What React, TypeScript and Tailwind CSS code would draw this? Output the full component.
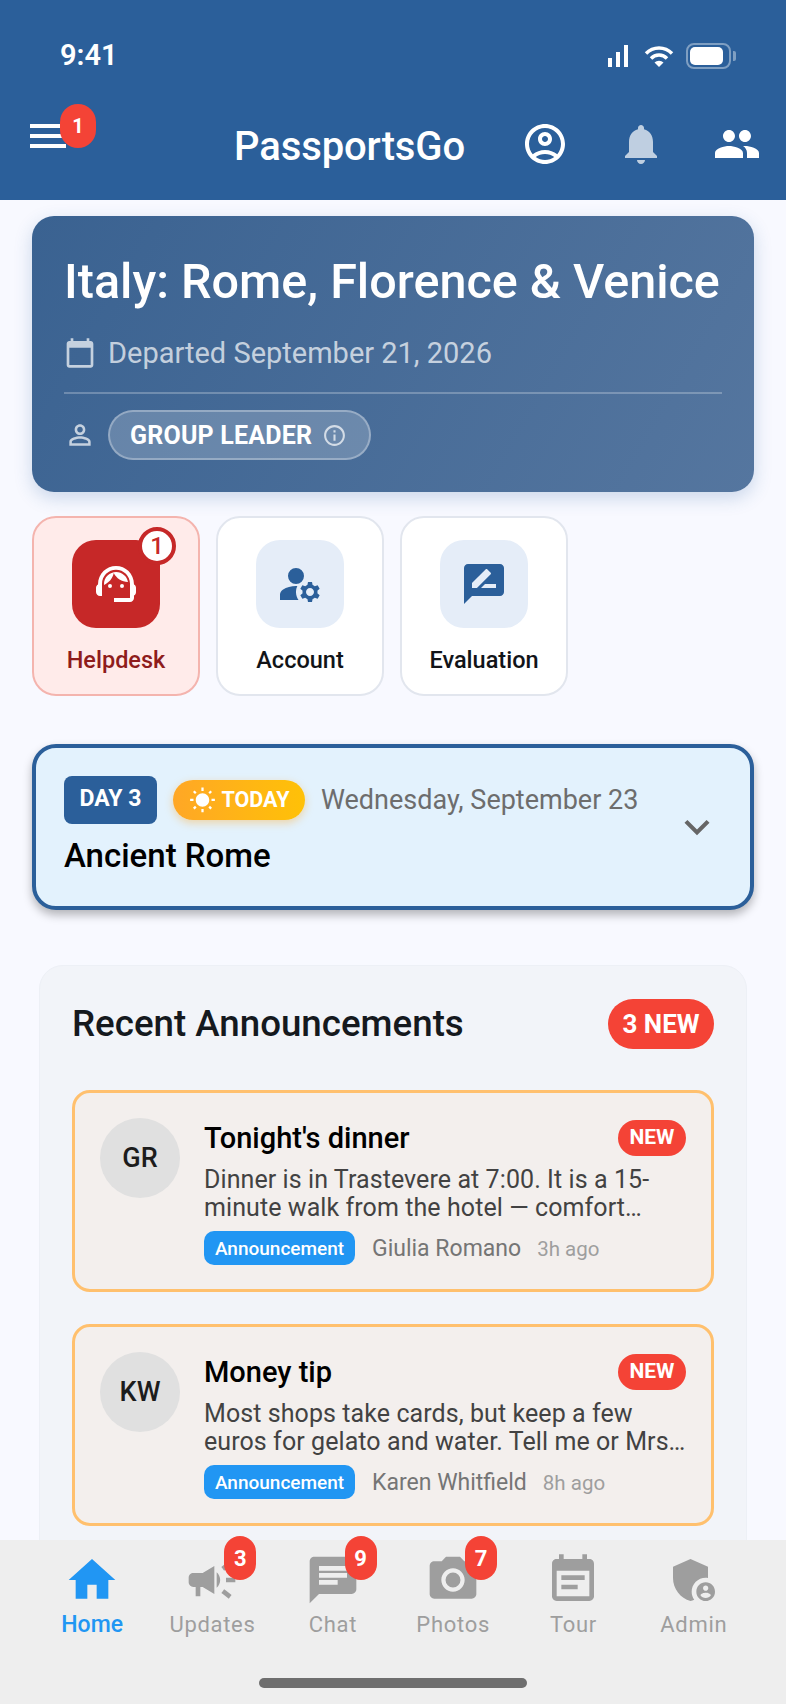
import React from "react";

const P = {
  account: "M12 2C6.48 2 2 6.48 2 12s4.48 10 10 10 10-4.48 10-10S17.52 2 12 2zM7.35 18.5C8.66 17.56 10.26 17 12 17s3.34.56 4.65 1.5c-1.31.94-2.91 1.5-4.65 1.5s-3.34-.56-4.65-1.5zm10.79-1.38C16.45 15.8 14.32 15 12 15s-4.45.8-6.14 2.12C4.7 15.73 4 13.95 4 12c0-4.42 3.58-8 8-8s8 3.58 8 8c0 1.95-.7 3.73-1.86 5.12zM12 6c-1.93 0-3.5 1.57-3.5 3.5S10.07 13 12 13s3.5-1.57 3.5-3.5S13.93 6 12 6zm0 5c-.83 0-1.5-.67-1.5-1.5S11.17 8 12 8s1.5.67 1.5 1.5S12.83 11 12 11z",
  bell: "M12 22c1.1 0 2-.9 2-2h-4c0 1.1.89 2 2 2zm6-6v-5c0-3.07-1.64-5.64-4.5-6.32V4c0-.83-.67-1.5-1.5-1.5s-1.5.67-1.5 1.5v.68C7.63 5.36 6 7.92 6 11v5l-2 2v1h16v-1l-2-2z",
  people: "M16 11c1.66 0 2.99-1.34 2.99-3S17.66 5 16 5c-1.66 0-3 1.34-3 3s1.34 3 3 3zm-8 0c1.66 0 2.99-1.34 2.99-3S9.66 5 8 5C6.34 5 5 6.34 5 8s1.34 3 3 3zm0 2c-2.33 0-7 1.17-7 3.5V19h14v-2.5c0-2.33-4.67-3.5-7-3.5zm8 0c-.29 0-.62.02-.97.05 1.16.84 1.97 1.97 1.97 3.45V19h6v-2.5c0-2.33-4.67-3.5-7-3.5z",
  calendar: "M20 3h-1V1h-2v2H7V1H5v2H4c-1.1 0-2 .9-2 2v16c0 1.1.9 2 2 2h16c1.1 0 2-.9 2-2V5c0-1.1-.9-2-2-2zm0 18H4V8h16v13z",
  person: "M12 5.9c1.16 0 2.1.94 2.1 2.1s-.94 2.1-2.1 2.1S9.9 9.16 9.9 8s.94-2.1 2.1-2.1m0 9c2.97 0 6.1 1.46 6.1 2.1v1.1H5.9V17c0-.64 3.13-2.1 6.1-2.1M12 4C9.79 4 8 5.79 8 8s1.79 4 4 4 4-1.79 4-4-1.79-4-4-4zm0 9c-2.67 0-8 1.34-8 4v3h16v-3c0-2.66-5.33-4-8-4z",
  info: "M11 7h2v2h-2zm0 4h2v6h-2zm1-9C6.48 2 2 6.48 2 12s4.48 10 10 10 10-4.48 10-10S17.52 2 12 2zm0 18c-4.41 0-8-3.59-8-8s3.59-8 8-8 8 3.59 8 8-3.59 8-8 8z",
  agent: "M21 12.22C21 6.73 16.74 3 12 3c-4.69 0-9 3.65-9 9.28-.6.34-1 .98-1 1.72v2c0 1.1.9 2 2 2h1v-6.1c0-3.87 3.13-7 7-7s7 3.13 7 7V19h-8v2h8c1.1 0 2-.9 2-2v-1.22c.59-.31 1-.92 1-1.64v-2.3c0-.7-.41-1.31-1-1.62zM8 13a1 1 0 1 0 2 0 1 1 0 1 0-2 0zM14 13a1 1 0 1 0 2 0 1 1 0 1 0-2 0zM18 11.03C17.52 8.18 15.04 6 12.05 6c-3.03 0-6.29 2.51-6.03 6.45 2.47-1.01 4.33-3.21 4.86-5.89 1.31 2.63 4 4.44 7.12 4.47z",
  manage: "M10.67 13.02c-.22-.01-.44-.02-.67-.02-2.42 0-4.68.67-6.61 1.82-.88.52-1.39 1.5-1.39 2.53V20h9.26c-.79-1.13-1.26-2.51-1.26-4 0-1.07.25-2.07.67-2.98zM6 8a4 4 0 1 0 8 0 4 4 0 1 0-8 0zM20.75 16c0-.22-.03-.42-.06-.63l1.14-1.01-1-1.73-1.45.49c-.32-.27-.68-.48-1.08-.63L18 11h-2l-.3 1.49c-.4.15-.76.36-1.08.63l-1.45-.49-1 1.73 1.14 1.01c-.03.21-.06.41-.06.63s.03.42.06.63l-1.14 1.01 1 1.73 1.45-.49c.32.27.68.48 1.08.63L16 21h2l.3-1.49c.4-.15.76-.36 1.08-.63l1.45.49 1-1.73-1.14-1.01c.03-.21.06-.41.06-.63zM17 18c-1.1 0-2-.9-2-2s.9-2 2-2 2 .9 2 2-.9 2-2 2z",
  review: "M20 2H4c-1.1 0-2 .9-2 2v18l4-4h14c1.1 0 2-.9 2-2V4c0-1.1-.9-2-2-2zM6 14v-2.47l6.88-6.88c.2-.2.51-.2.71 0l1.77 1.77c.2.2.2.51 0 .71L8.47 14H6zm12 0h-7.5l2-2H18v2z",
  sun: "M6.76 4.84l-1.8-1.79-1.41 1.41 1.79 1.79 1.42-1.41zM4 10.5H1v2h3v-2zm9-9.95h-2V3.5h2V.55zm7.45 3.91l-1.41-1.41-1.79 1.79 1.41 1.41 1.79-1.79zm-3.21 13.7l1.79 1.8 1.41-1.41-1.8-1.79-1.4 1.4zM20 10.5v2h3v-2h-3zm-8-5c-3.31 0-6 2.69-6 6s2.69 6 6 6 6-2.69 6-6-2.69-6-6-6zm-1 16.95h2V19.5h-2v2.95zm-7.45-3.91l1.41 1.41 1.79-1.8-1.41-1.41-1.79 1.8z",
  expand: "M16.59 8.59L12 13.17 7.41 8.59 6 10l6 6 6-6z",
  home: "M10 20v-6h4v6h5v-8h3L12 3 2 12h3v8z",
  campaign: "M18 11v2h4v-2h-4zm-2 6.61c.96.71 2.21 1.65 3.2 2.39.4-.53.8-1.07 1.2-1.6-.99-.74-2.24-1.68-3.2-2.4-.4.54-.8 1.08-1.2 1.61zM20.4 5.6c-.4-.53-.8-1.07-1.2-1.6-.99.74-2.24 1.68-3.2 2.4.4.53.8 1.07 1.2 1.6.96-.72 2.21-1.65 3.2-2.4zM4 9c-1.1 0-2 .9-2 2v2c0 1.1.9 2 2 2h1v4h2v-4h1l5 3V6L8 9H4zm11.5 3c0-1.33-.58-2.53-1.5-3.35v6.69c.92-.81 1.5-2.01 1.5-3.34z",
  chat: "M20 2H4c-1.1 0-1.99.9-1.99 2L2 22l4-4h14c1.1 0 2-.9 2-2V4c0-1.1-.9-2-2-2zM6 9h12v2H6V9zm8 5H6v-2h8v2zm4-6H6V6h12v2z",
  camera: "M8.8 12a3.2 3.2 0 1 0 6.4 0 3.2 3.2 0 1 0-6.4 0zM9 2L7.17 4H4c-1.1 0-2 .9-2 2v12c0 1.1.9 2 2 2h16c1.1 0 2-.9 2-2V6c0-1.1-.9-2-2-2h-3.17L15 2H9zm3 15c-2.76 0-5-2.24-5-5s2.24-5 5-5 5 2.24 5 5-2.24 5-5 5z",
  note: "M17 10H7v2h10v-2zm2-7h-1V1h-2v2H8V1H6v2H5c-1.11 0-1.99.9-1.99 2L3 19c0 1.1.89 2 2 2h14c1.1 0 2-.9 2-2V5c0-1.1-.9-2-2-2zm0 16H5V8h14v11zm-5-5H7v2h7v-2z",
  admin: "M17 11c.34 0 .67.04 1 .09V6.27L10.5 3 3 6.27v4.91c0 4.54 3.2 8.79 7.5 9.82.55-.13 1.08-.32 1.6-.55-.69-.98-1.1-2.17-1.1-3.45 0-3.31 2.69-6 6-6zM17 13c-2.21 0-4 1.79-4 4s1.79 4 4 4 4-1.79 4-4-1.79-4-4-4zm0 1.38c.62 0 1.12.51 1.12 1.12s-.51 1.12-1.12 1.12-1.12-.51-1.12-1.12.5-1.12 1.12-1.12zm0 5.37c-.93 0-1.74-.46-2.24-1.17.05-.72 1.51-1.08 2.24-1.08s2.19.36 2.24 1.08c-.5.71-1.31 1.17-2.24 1.17z",
};

function Icon({ d, className }: { d: string; className: string }) {
  return (
    <svg viewBox="0 0 24 24" fill="currentColor" className={className}>
      <path d={d} />
    </svg>
  );
}

function StatusBar() {
  return (
    <div className="flex h-[110px] items-start justify-between pl-[60px] pr-[50px] pt-[36px] text-white">
      <span className="text-[29px] leading-[38px] font-semibold">9:41</span>
      <div className="flex items-center gap-[12px] pt-[7px]">
        <div className="flex items-center gap-[15px]">
          <svg viewBox="0 0 21 22" className="h-[22px] w-[21px]" fill="currentColor">
            <rect x="0" y="13" width="4" height="9" />
            <rect x="8" y="7" width="4" height="15" />
            <rect x="16" y="0" width="4" height="22" />
          </svg>
          <svg viewBox="0 0 30 22" className="h-[22px] w-[30px]" fill="none" stroke="currentColor" strokeWidth="3.4">
            <path d="M2 8.5a18 18 0 0 1 26 0" />
            <path d="M7 13.5a11 11 0 0 1 16 0" />
            <path d="M10.500 17.500 15 22l4.500-4.500a6.500 6.500 0 0 0-9 0z" fill="currentColor" stroke="none" />
          </svg>
        </div>
        <div className="flex items-center gap-[2px]">
          <div className="flex h-[26px] w-[45px] items-center rounded-[8px] border-[2px] border-white/40 p-[2px]">
            <div className="h-full w-[33px] rounded-[5px] bg-white" />
          </div>
          <div className="h-[10px] w-[3px] rounded-r-[2px] bg-white/40" />
        </div>
      </div>
    </div>
  );
}

function TopBar() {
  return (
    <div className="relative flex h-[90px] items-start pl-[30px] pr-[25px]">
      <div className="mt-[14px] flex h-[24px] w-[36px] flex-col justify-between">
        <div className="h-[4px] bg-white" />
        <div className="h-[4px] bg-white" />
        <div className="h-[4px] bg-white" />
      </div>
      <span className="absolute left-[60px] top-[-6px] flex h-[44px] w-[36px] items-center justify-center rounded-full bg-[#f44336] text-[20px] font-bold text-white">
        1
      </span>
      <span className="ml-[168px] mt-[12px] text-[40px] leading-[50px] font-medium tracking-[-0.1px] text-white">PassportsGo</span>
      <div className="ml-auto flex items-center gap-[48px] pt-[10px] text-white">
        <Icon d={P.account} className="size-[48px]" />
        <Icon d={P.bell} className="size-[48px] text-white/70" />
        <Icon d={P.people} className="size-[48px]" />
      </div>
    </div>
  );
}

function TripCard() {
  return (
    <section className="flex h-[276px] flex-col rounded-[22px] bg-[linear-gradient(120deg,#3a6291,#55769f)] px-[32px] pt-[38px] shadow-[0_6px_18px_rgba(42,95,158,0.22)]">
      <h1 className="text-[48.5px] leading-[56px] font-medium whitespace-nowrap text-white">Italy: Rome, Florence &amp; Venice</h1>
      <div className="mt-[25px] flex items-center gap-[12px] text-white/70">
        <Icon d={P.calendar} className="size-[32px]" />
        <span className="text-[29px] leading-[36px]">Departed September 21, 2026</span>
      </div>
      <div className="mt-[21px] h-[2px] bg-white/25" />
      <div className="mt-[16px] flex items-center gap-[12px]">
        <Icon d={P.person} className="size-[32px] text-white/70" />
        <div className="flex h-[50px] w-[263px] items-center gap-[10px] rounded-full border-[2px] border-white/30 bg-white/20 pl-[20px] pt-[1px] text-white">
          <span className="text-[25px] font-bold tracking-[0.2px] whitespace-nowrap">GROUP LEADER</span>
          <Icon d={P.info} className="size-[25px] text-white/70" />
        </div>
      </div>
    </section>
  );
}

function Tile({ icon, label, danger }: { icon: string; label: string; danger?: boolean }) {
  return (
    <div
      className={
        danger
          ? "relative flex h-[180px] w-[168px] flex-col items-center rounded-[24px] border-[2px] border-[#f4b4ae] bg-[#ffebea] pt-[22px]"
          : "relative flex h-[180px] w-[168px] flex-col items-center rounded-[24px] border-[2px] border-[#e2e6ee] bg-white pt-[22px]"
      }
    >
      <div
        className={
          danger
            ? "flex size-[88px] items-center justify-center rounded-[24px] bg-[#c62828] text-white"
            : "flex size-[88px] items-center justify-center rounded-[24px] bg-[#e5edf8] text-[#2b5f9a]"
        }
      >
        <Icon d={icon} className="size-[48px]" />
      </div>
      <span className={danger ? "mt-[16px] text-[23.5px] leading-[32px] font-medium text-[#8e1c1c]" : "mt-[16px] text-[23.5px] leading-[32px] font-medium text-[#111418]"}>
        {label}
      </span>
      {danger && (
        <span className="absolute left-[104px] top-[9px] flex size-[38px] items-center justify-center rounded-full border-[4px] border-[#c62828] bg-white text-[24px] font-medium text-[#c62828]">
          1
        </span>
      )}
    </div>
  );
}

function DayCard() {
  return (
    <section className="flex h-[166px] items-center rounded-[24px] border-[4px] border-[#2b5f9a] bg-[#e3f2fd] pl-[28px] pr-[28px] shadow-[0_5px_10px_rgba(0,0,0,0.28)]">
      <div className="flex-1 pb-[2px]">
        <div className="flex items-center">
          <span className="flex h-[48px] w-[93px] items-center justify-center rounded-[8px] bg-[#2b5f9a] text-[23px] font-bold text-white">DAY 3</span>
          <span className="ml-[16px] flex h-[40px] w-[132px] items-center justify-center gap-[6px] rounded-full bg-[linear-gradient(90deg,#ffa726,#ffc107)] pt-[1px] text-white shadow-[0_3px_8px_rgba(255,167,38,0.4)]">
            <Icon d={P.sun} className="size-[27px]" />
            <span className="text-[21.5px] font-bold">TODAY</span>
          </span>
          <span className="ml-[16px] pt-[1px] text-[27px] leading-[36px] text-[#6d6d6d]">Wednesday, September 23</span>
        </div>
        <h2 className="mt-[11px] text-[33px] leading-[42px] font-medium text-black">Ancient Rome</h2>
      </div>
      <Icon d={P.expand} className="size-[50px] text-[#666666]" />
    </section>
  );
}

function AnnouncementCard({ initials, title, lines, author, age }: { initials: string; title: string; lines: string[]; author: string; age: string }) {
  return (
    <article className="flex h-[202px] rounded-[18px] border-[3px] border-[#ffc06e] bg-[#f3efed] pl-[25px] pr-[25px] pt-[25px]">
      <div className="flex size-[80px] shrink-0 items-center justify-center rounded-full bg-[#e0e0e0] text-[27px] font-medium text-[#1c1c1c]">{initials}</div>
      <div className="ml-[24px] min-w-0 flex-1">
        <div className="flex h-[40px] items-center justify-between">
          <h3 className="text-[29px] leading-[36px] font-medium text-black">{title}</h3>
          <span className="flex h-[36px] w-[68px] items-center justify-center rounded-full bg-[#f44336] text-[21px] font-bold text-white">NEW</span>
        </div>
        <p className="mt-[8px] text-[25px] leading-[28px] tracking-[0.08px] whitespace-nowrap text-[#424242]">
          {lines[0]}
          <br />
          {lines[1]}
        </p>
        <div className="mt-[8px] flex items-center">
          <span className="flex h-[34px] w-[151px] items-center justify-center rounded-[10px] bg-[#2196f3] pt-[1px] text-[19px] font-medium text-white">Announcement</span>
          <span className="ml-[17px] pt-[2px] text-[23px] text-[#757575]">{author}</span>
          <span className="ml-[16px] pt-[3px] text-[20.5px] text-[#9e9e9e]">{age}</span>
        </div>
      </div>
    </article>
  );
}

function Announcements() {
  return (
    <section className="mx-[7px] mt-[55px] rounded-[24px] border border-[#edf0f6] bg-[#f2f4f9] px-[32px] pb-[40px] pt-[33px]">
      <div className="flex h-[50px] items-center justify-between">
        <h2 className="text-[36.7px] font-medium text-[#15191e]">Recent Announcements</h2>
        <span className="flex h-[50px] w-[106px] items-center justify-center rounded-full bg-[#f44336] text-[26px] font-bold text-white">3 NEW</span>
      </div>
      <div className="mt-[41px] flex flex-col gap-[32px]">
        <AnnouncementCard
          initials="GR"
          title="Tonight's dinner"
          lines={["Dinner is in Trastevere at 7:00. It is a 15-", "minute walk from the hotel — comfort…"]}
          author="Giulia Romano"
          age="3h ago"
        />
        <AnnouncementCard
          initials="KW"
          title="Money tip"
          lines={["Most shops take cards, but keep a few", "euros for gelato and water. Tell me or Mrs…"]}
          author="Karen Whitfield"
          age="8h ago"
        />
      </div>
    </section>
  );
}

const tabs = [
  { label: "Home", icon: P.home, active: true },
  { label: "Updates", icon: P.campaign, badge: "3" },
  { label: "Chat", icon: P.chat, badge: "9" },
  { label: "Photos", icon: P.camera, badge: "7" },
  { label: "Tour", icon: P.note },
  { label: "Admin", icon: P.admin },
];

function BottomNav() {
  return (
    <nav className="relative z-10 h-[164px] shrink-0 bg-[#eeeeee]">
      <div className="grid grid-cols-6 px-[32px] pt-[12px]">
        {tabs.map((t) => (
          <div key={t.label} className={t.active ? "relative flex flex-col items-center text-[#2196f3]" : "relative flex flex-col items-center text-[#9e9e9e]"}>
            <Icon d={t.icon} className="size-[56px]" />
            <span className={t.active ? "mt-[2px] text-[23px] leading-[30px] font-medium" : "mt-[2px] text-[22px] leading-[30px] tracking-[0.7px]"}>{t.label}</span>
            {t.badge && (
              <span className="absolute left-[72px] top-[-16px] flex h-[44px] w-[32px] items-center justify-center rounded-full bg-[#f44336] text-[22px] font-bold text-white">
                {t.badge}
              </span>
            )}
          </div>
        ))}
      </div>
      <div className="absolute bottom-[16px] left-[259px] h-[10px] w-[268px] rounded-full bg-[#6e6e6e]" />
    </nav>
  );
}

export default function App() {
  return (
    <div className="flex h-[1704px] w-[786px] flex-col overflow-hidden bg-[#f8f9ff] [font-family:Roboto,sans-serif]">
      <header className="h-[200px] shrink-0 bg-[#2b5f9a]">
        <StatusBar />
        <TopBar />
      </header>
      <main className="min-h-0 flex-1 overflow-hidden px-[32px] pt-[16px]">
        <TripCard />
        <div className="mt-[24px] flex gap-[16px]">
          <Tile icon={P.agent} label="Helpdesk" danger />
          <Tile icon={P.manage} label="Account" />
          <Tile icon={P.review} label="Evaluation" />
        </div>
        <div className="mt-[48px]">
          <DayCard />
        </div>
        <Announcements />
      </main>
      <BottomNav />
    </div>
  );
}
